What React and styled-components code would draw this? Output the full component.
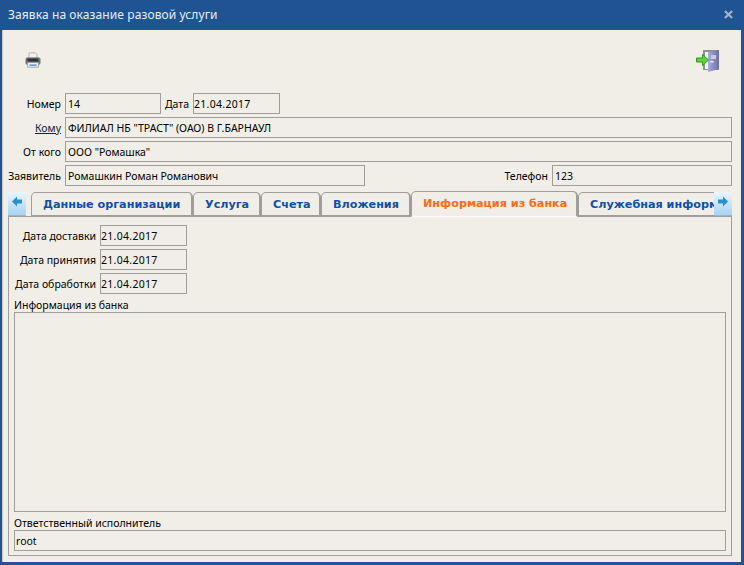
import React from 'react';
import styled, { createGlobalStyle } from 'styled-components';

const GlobalStyle = createGlobalStyle`
    html, body {
        margin: 0;
        padding: 0;
        background: #1f5391;
    }
    * {
        box-sizing: border-box;
    }
`;

const TEXT_FONT = `"Noto Sans", "DejaVu Sans", sans-serif`;
const LINE = '#a09e98';

const Window = styled.div`
    width: 744px;
    height: 565px;
    display: flex;
    flex-direction: column;
    padding: 0 3px 3px 2px;
    background: #1f5391;
    overflow: hidden;
    font-family: ${TEXT_FONT};
    font-size: 10.5px;
    color: #000;
`;

const TitleBar = styled.div`
    height: 30px;
    flex: none;
    display: flex;
    align-items: center;
    justify-content: space-between;
    padding: 0 8px 2px 6px;
    color: #e6edf5;
    font-size: 12px;
    letter-spacing: 0.1px;
`;

const CloseIcon = styled.svg`
    width: 9px;
    height: 9px;
`;

const Body = styled.div`
    flex: 1;
    display: flex;
    flex-direction: column;
    padding: 0 9px 6px 2px;
    background: #f1eee7;
    border-left: 1px solid #c9c6bf;
`;

const Toolbar = styled.div`
    height: 63px;
    flex: none;
    display: flex;
    align-items: flex-start;
    justify-content: space-between;
    padding: 19px 12px 0 20px;
`;

const ToolIcon = styled.svg`
    display: block;
    margin-top: ${(p) => p.$top || 0}px;
`;

const Form = styled.div`
    display: flex;
    flex-direction: column;
    gap: 3px;
`;

const Row = styled.div`
    display: flex;
    align-items: center;
    height: 21px;
`;

const Label = styled.label`
    flex: none;
    width: ${(p) => p.$width || 56}px;
    margin-right: ${(p) => p.$gap || 4}px;
    text-align: right;
    white-space: nowrap;
    color: ${(p) => (p.$link ? '#14233f' : '#000')};
    text-decoration: ${(p) => (p.$link ? 'underline' : 'none')};
`;

const Field = styled.div`
    height: 21px;
    flex: ${(p) => (p.$width ? '0 0 auto' : '1 1 0')};
    width: ${(p) => (p.$width ? `${p.$width}px` : 'auto')};
    margin-right: ${(p) => p.$after || 0}px;
    display: flex;
    align-items: center;
    padding-left: ${(p) => p.$pad ?? 2}px;
    border: 1px solid ${LINE};
    white-space: nowrap;
    overflow: hidden;
`;

const DateField = styled(Field)`
    letter-spacing: 0.3px;
`;

const WideField = styled(Field)`
    flex: none;
    padding-left: 1px;
`;

const TabStrip = styled.div`
    display: flex;
    align-items: flex-end;
    height: 26px;
    margin: 5px 0 -1px 3px;
    position: relative;
    z-index: 1;
`;

const ArrowButton = styled.div`
    flex: none;
    width: 18px;
    height: 24px;
    margin-bottom: 1px;
    display: flex;
    align-items: center;
    justify-content: center;
    padding-bottom: 4px;
    background: linear-gradient(#eaf5fe, #a9d3f3);
    border-bottom: 1px solid #8fb9dc;
`;

const TabList = styled.div`
    flex: 1;
    min-width: 0;
    display: flex;
    align-items: flex-end;
    overflow: hidden;
    margin-left: 5px;
`;

const Tab = styled.div`
    flex: none;
    width: ${(p) => p.$width}px;
    height: ${(p) => (p.$active ? 26 : 25)}px;
    padding: 5px 0 0 11px;
    border: 1px solid ${LINE};
    border-right-width: 2px;
    border-bottom: ${(p) => (p.$active ? '1px solid #fff' : `2px solid ${LINE}`)};
    border-radius: 5px 5px 0 0;
    background: #f1eee7;
    color: ${(p) => (p.$active ? '#fb6a14' : '#0f50a8')};
    font-family: "DejaVu Sans", sans-serif;
    font-size: 11.2px;
    font-weight: 700;
    white-space: nowrap;
    overflow: hidden;
`;

const Panel = styled.div`
    flex: 1;
    min-height: 0;
    display: flex;
    flex-direction: column;
    margin-left: 3px;
    padding: 8px 5px 4px 5px;
    border: 1px solid ${LINE};
`;

const DateRows = styled(Form)`
    margin-bottom: 5px;
`;

const CaptionedLabel = styled.div`
    flex: none;
    height: 13px;
    line-height: 12px;
    white-space: nowrap;
`;

const TextArea = styled.div`
    flex: 1;
    min-height: 0;
    margin-bottom: 5px;
    border: 1px solid ${LINE};
`;

const dates = ['Дата доставки', 'Дата принятия', 'Дата обработки'];

const tabs = [
    { title: 'Данные организации', width: 162 },
    { title: 'Услуга', width: 68 },
    { title: 'Счета', width: 60 },
    { title: 'Вложения', width: 90 },
    { title: 'Информация из банка', width: 167, active: true },
    { title: 'Служебная информация', width: 190 },
];

const PrinterIcon = () => (
    <ToolIcon width="16" height="16" viewBox="0 0 18 18" $top={3}>
        <path d="M4.500 1h7l2 2v5h-9z" fill="#eef1f3" stroke="#a9aeb2" />
        <rect x="1" y="6.500" width="16" height="7.500" rx="1.500" fill="#5f6468" stroke="#868b8f" />
        <rect x="3" y="7.500" width="12" height="3" fill="#2e3236" />
        <rect x="3" y="12" width="12" height="5" fill="#f5f7f8" stroke="#9aa0a4" />
        <rect x="5" y="14" width="8" height="1.500" fill="#4a86c8" />
        <rect x="15" y="8" width="1" height="1" fill="#6fd05a" />
    </ToolIcon>
);

const DoorIcon = () => (
    <ToolIcon width="24" height="23" viewBox="0 0 24 23">
        <defs>
            <linearGradient id="doorFill" x1="0" y1="0" x2="1" y2="0">
                <stop offset="0" stopColor="#a8aedc" />
                <stop offset="1" stopColor="#6b6fa6" />
            </linearGradient>
        </defs>
        <rect x="7" y="1" width="16" height="20" fill="#8f918f" />
        <rect x="9" y="3" width="5" height="17" fill="#f4f4ee" />
        <path d="M12 3l11-2v19l-11 3z" fill="url(#doorFill)" />
        <rect x="15" y="6" width="5" height="4" fill="#c4c8ea" />
        <rect x="14.500" y="12" width="3" height="1.500" fill="#f4f4ff" />
        <path d="M0.500 9h6V5.500l6 5.500-6 5.500V13h-6z" fill="#63d13a" stroke="#2f9a1f" />
    </ToolIcon>
);

const ArrowIcon = ({ flip }) => (
    <svg width="12" height="11" viewBox="0 0 12 11">
        <path
            d={flip ? 'M11 5.500L6 .5v3H1v4h5v3z' : 'M1 5.500L6 .5v3h5v4H6v3z'}
            fill="#2a8fd0"
        />
    </svg>
);

const App = () => {
    return (
        <Window>
            <GlobalStyle />
            <TitleBar>
                <span>Заявка на оказание разовой услуги</span>
                <CloseIcon viewBox="0 0 10 10">
                    <path d="M1 1l8 8M9 1l-8 8" stroke="#9fb3ca" strokeWidth="2.400" />
                </CloseIcon>
            </TitleBar>
            <Body>
                <Toolbar>
                    <PrinterIcon />
                    <DoorIcon />
                </Toolbar>
                <Form>
                    <Row>
                        <Label>Номер</Label>
                        <Field $width={96} $after={3}>14</Field>
                        <Label $width={25}>Дата</Label>
                        <DateField $width={87} $pad={0}>21.04.2017</DateField>
                    </Row>
                    <Row>
                        <Label $link>Кому</Label>
                        <Field>ФИЛИАЛ НБ "ТРАСТ" (ОАО) В Г.БАРНАУЛ</Field>
                    </Row>
                    <Row>
                        <Label>От кого</Label>
                        <Field>ООО "Ромашка"</Field>
                    </Row>
                    <Row>
                        <Label>Заявитель</Label>
                        <Field $width={300} $after={139}>Ромашкин Роман Романович</Field>
                        <Label $width={44}>Телефон</Label>
                        <Field>123</Field>
                    </Row>
                </Form>
                <TabStrip>
                    <ArrowButton><ArrowIcon /></ArrowButton>
                    <TabList>
                        {tabs.map((tab) => (
                            <Tab key={tab.title} $width={tab.width} $active={tab.active}>
                                {tab.title}
                            </Tab>
                        ))}
                    </TabList>
                    <ArrowButton><ArrowIcon flip /></ArrowButton>
                </TabStrip>
                <Panel>
                    <DateRows>
                        {dates.map((label) => (
                            <Row key={label}>
                                <Label $width={82}>{label}</Label>
                                <DateField $width={87} $pad={0}>21.04.2017</DateField>
                            </Row>
                        ))}
                    </DateRows>
                    <CaptionedLabel>Информация из банка</CaptionedLabel>
                    <TextArea />
                    <CaptionedLabel>Ответственный исполнитель</CaptionedLabel>
                    <WideField>root</WideField>
                </Panel>
            </Body>
        </Window>
    );
};

export default App;
